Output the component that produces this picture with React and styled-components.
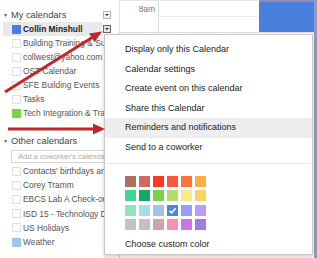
import React from 'react';
import styled, { createGlobalStyle } from 'styled-components';

const myCalendars = [
  { name: 'Collin Minshull', color: '#4a7de0', active: true },
  { name: 'Building Training & Support', color: null },
  { name: 'collwest@yahoo.com', color: null },
  { name: 'OST Calendar', color: null },
  { name: 'SFE Building Events', color: null },
  { name: 'Tasks', color: null },
  { name: 'Tech Integration & Training', color: '#7bd148' },
];

const otherCalendars = [
  { name: "Contacts' birthdays and events", color: null },
  { name: 'Corey Tramm', color: null },
  { name: 'EBCS Lab A Check-out', color: null },
  { name: 'ISD 15 - Technology Dept', color: null },
  { name: 'US Holidays', color: null },
  { name: 'Weather', color: '#9fc6e7' },
];

const menuItems = [
  'Display only this Calendar',
  'Calendar settings',
  'Create event on this calendar',
  'Share this Calendar',
  'Reminders and notifications',
  'Send to a coworker',
];

const palette = [
  '#ac725e', '#d06b64', '#f83a22', '#fa573c', '#ff7537', '#ffad46',
  '#42d692', '#16a765', '#7bd148', '#b3dc6c', '#fbe983', '#fad165',
  '#92e1c0', '#9fe1e7', '#9fc6e7', '#4986e7', '#9a9cff', '#b99aff',
  '#c2c2c2', '#cabdbf', '#cca6ac', '#f691b2', '#cd74e6', '#a47ae2',
];

const GlobalStyle = createGlobalStyle`
    body {
        margin: 0;
        background: #fff;
        font-family: "Liberation Sans", Arial, sans-serif;
    }
`

const App = () => {
    return (
      <Page>
        <GlobalStyle />
        <Sidebar>
            <HeaderRow>
                <HeaderItem>
                    <Toggle>▼</Toggle>
                    <HeaderTitle>My calendars</HeaderTitle>
                </HeaderItem>
                <DropButton><Caret /></DropButton>
            </HeaderRow>
            {myCalendars.map((c) => (
                <Row key={c.name}>
                    <Item $active={c.active}>
                        <Swatch $color={c.color} />
                        <Name $active={c.active}>{c.name}</Name>
                    </Item>
                    {c.active && <DropButton $pressed><Caret /></DropButton>}
                </Row>
            ))}
            <HeaderRow $gap>
                <HeaderItem>
                    <Toggle>▼</Toggle>
                    <HeaderTitle>Other calendars</HeaderTitle>
                </HeaderItem>
            </HeaderRow>
            <AddBox>Add a coworker's calendar</AddBox>
            {otherCalendars.map((c) => (
                <Row key={c.name} $tall>
                    <Item>
                        <Swatch $color={c.color} />
                        <Name>{c.name}</Name>
                    </Item>
                </Row>
            ))}
        </Sidebar>
        <Grid>
            <HourRow>
                <TimeLabel>8am</TimeLabel>
                <HourCell />
                <Event />
            </HourRow>
        </Grid>

        <Menu>
            {menuItems.map((m, i) => (
                <MenuItem key={m} $hover={i === 4}>{m}</MenuItem>
            ))}
            <Separator />
            <Palette>
                {palette.map((p) => (
                    <Chip key={p} $color={p}>
                        {p === '#4986e7' && (
                          <svg width="9" height="9" viewBox="0 0 9 9">
                            <path d="M1.5 4.8 L3.6 6.8 L7.6 2.2" fill="none" stroke="#fff" strokeWidth="1.6" />
                          </svg>
                        )}
                    </Chip>
                ))}
            </Palette>
            <MenuItem $last>Choose custom color</MenuItem>
        </Menu>

        <Arrows width="317" height="258" viewBox="0 0 317 258">
            <line x1="5" y1="92" x2="93" y2="37" stroke="#c2262b" strokeWidth="3" />
            <polygon points="102,31.5 94.6,42.3 89.1,33.6" fill="#c2262b" />
            <line x1="8" y1="129" x2="95" y2="129" stroke="#c2262b" strokeWidth="3" />
            <polygon points="105,129 93,123.5 93,134.5" fill="#c2262b" />
        </Arrows>
      </Page>
    );
};

export default App;

const Page = styled.div`
    position: relative;
    display: flex;
    width: 317px;
    height: 258px;
    overflow: hidden;
    background: #fff;
`

const Sidebar = styled.div`
    width: 120px;
    flex-shrink: 0;
    padding-top: 8px;
    box-sizing: border-box;
    border-right: 1px solid #dcdcdc;
`

const HeaderRow = styled.div`
    display: flex;
    align-items: center;
    height: 14px;
    padding-right: 8px;
    margin-top: ${p => p.$gap ? '14px' : '0'};
`

const HeaderItem = styled.div`
    flex: 1;
    display: flex;
    align-items: center;
    padding-left: 3px;
    gap: 3px;
`

const Toggle = styled.span`
    font-size: 5px;
    width: 5px;
    color: #555;
`

const HeaderTitle = styled.span`
    font-size: 9.3px;
    color: #444;
`

const Row = styled.div`
    display: flex;
    align-items: center;
    height: ${p => p.$tall ? '14.2px' : '14px'};
    padding-right: 8px;
`

const Item = styled.div`
    flex: 1;
    min-width: 0;
    height: 100%;
    display: flex;
    align-items: center;
    gap: 2px;
    margin-left: 3px;
    padding-left: 9px;
    background: ${p => p.$active ? '#e9e9e9' : 'transparent'};
    overflow: hidden;
`

const Swatch = styled.span`
    width: 9px;
    height: 9px;
    flex-shrink: 0;
    box-sizing: border-box;
    background: ${p => p.$color || '#fff'};
    border: 1px solid ${p => p.$color || '#e0e0e0'};
`

const Name = styled.span`
    font-size: 8.4px;
    white-space: nowrap;
    color: ${p => p.$active ? '#222' : '#555'};
    font-weight: ${p => p.$active ? 'bold' : 'normal'};
`

const DropButton = styled.div`
    width: 8px;
    height: 8px;
    margin-left: 1px;
    box-sizing: border-box;
    border: 1px solid ${p => p.$pressed ? '#666' : '#b5b5b5'};
    background: ${p => p.$pressed ? '#e4e4e4' : 'linear-gradient(#fff, #eee)'};
    display: flex;
    align-items: center;
    justify-content: center;
`

const Caret = styled.span`
    width: 0;
    height: 0;
    border-left: 2px solid transparent;
    border-right: 2px solid transparent;
    border-top: 2px solid #333;
`

const AddBox = styled.div`
    margin: 2px 0 1px 11px;
    height: 13px;
    box-sizing: border-box;
    border: 1px solid #d6d6d6;
    padding-left: 6px;
    font-size: 7.6px;
    line-height: 11px;
    color: #aaa;
    white-space: nowrap;
    overflow: hidden;
`

const Grid = styled.div`
    flex: 1;
    border-right: 3px solid #8b9cc2;
`

const HourRow = styled.div`
    display: flex;
    height: 33px;
    border-top: 1px solid #e6e6e6;
    box-sizing: border-box;
    border-bottom: 1px solid #dcdcdc;
`

const TimeLabel = styled.div`
    width: 39px;
    border-right: 1px solid #dcdcdc;
    text-align: right;
    padding: 3px 3px 0 0;
    box-sizing: border-box;
    font-size: 8.4px;
    color: #777;
`

const HourCell = styled.div`
    flex: 1;
    background: linear-gradient(to bottom, transparent 15px, #eee 15px, #eee 16px, transparent 16px);
`

const Event = styled.div`
    width: 55px;
    margin-top: -1px;
    background: #4a7fdd;
    border-top: 2px solid #8d8bb8;
`

const Menu = styled.div`
    position: absolute;
    left: 104px;
    top: 34px;
    width: 209px;
    height: 221px;
    box-sizing: border-box;
    padding-top: 5px;
    background: #fff;
    border: 1px solid #c8c8c8;
    box-shadow: 0 2px 4px rgba(0, 0, 0, 0.2);
`

const MenuItem = styled.div`
    height: 19.5px;
    line-height: 19.5px;
    padding-left: 20px;
    font-size: 9px;
    color: #222;
    white-space: nowrap;
    background: ${p => p.$hover ? '#eeeeee' : 'transparent'};
    margin-top: ${p => p.$last ? '5px' : '0'};
`

const Separator = styled.div`
    margin-top: 6px;
    border-top: 1px solid #ebebeb;
`

const Palette = styled.div`
    display: grid;
    grid-template-columns: repeat(6, 11px);
    grid-auto-rows: 11px;
    column-gap: 3px;
    row-gap: 3.3px;
    margin: 12px 0 0 20px;
`

const Chip = styled.div`
    background: ${p => p.$color};
    display: flex;
    align-items: center;
    justify-content: center;
`

const Arrows = styled.svg`
    position: absolute;
    left: 0;
    top: 0;
    pointer-events: none;
`
